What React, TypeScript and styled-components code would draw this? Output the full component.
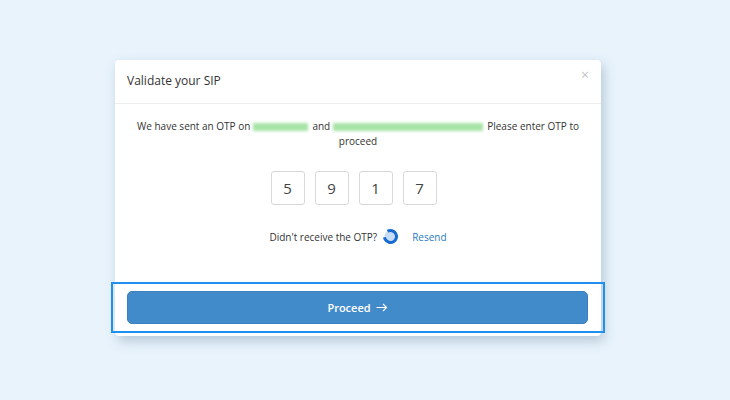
import styled, { createGlobalStyle } from "styled-components";

const Global = createGlobalStyle`
  html, body {
    margin: 0;
    padding: 0;
    background: #e8f3fc;
    font-family: "Open Sans", "Noto Sans", sans-serif;
  }
`;

const Page = styled.div`
  width: 730px;
  height: 400px;
  padding: 60px 0 0 115px;
  box-sizing: border-box;
`;

const Modal = styled.div`
  width: 486px;
  background: #fff;
  border-radius: 4px;
  box-shadow: 3px 5px 12px rgba(90, 120, 150, 0.35);
`;

const Header = styled.div`
  height: 44px;
  padding: 0 12px;
  display: flex;
  align-items: center;
  justify-content: space-between;
  border-bottom: 1px solid #eeeeee;
  box-sizing: border-box;
`;

const Title = styled.h4`
  margin: 0;
  font-size: 12px;
  font-weight: 400;
  color: #333;
  padding-bottom: 2px;
`;

const Close = styled.span`
  font-size: 14px;
  color: #c4c4c4;
  margin-top: -14px;
  line-height: 1;
`;

const Body = styled.div`
  padding: 15px 16px 0;
  text-align: center;
  color: #333;
  font-size: 10px;
`;

const Message = styled.p`
  margin: 0;
  line-height: 15px;
`;

const Blur = styled.span<{ $w: number }>`
  display: inline-block;
  width: ${(p) => p.$w}px;
  height: 8px;
  margin: 0 4px 0 3px;
  background: #a8e3a8;
  filter: blur(1.5px);
  vertical-align: middle;
`;

const OtpRow = styled.div`
  display: flex;
  justify-content: center;
  gap: 10px;
  margin-top: 22px;
  padding-right: 9px;
`;

const OtpBox = styled.div`
  width: 34px;
  height: 34px;
  border: 1px solid #d9d9d9;
  border-radius: 3px;
  box-sizing: border-box;
  display: flex;
  align-items: center;
  justify-content: center;
  font-size: 15px;
  color: #444;
`;

const ResendRow = styled.div`
  display: flex;
  justify-content: center;
  align-items: center;
  margin-top: 23px;
  font-size: 10px;
  color: #333;
`;

const Spinner = styled.svg`
  margin: 0 13px 0 5px;
`;

const ResendLink = styled.a`
  color: #2a7bc4;
  text-decoration: none;
`;

const Footer = styled.div`
  position: relative;
  padding: 46px 13px 12px 12px;
  &::after {
    content: "";
    position: absolute;
    left: -4px;
    right: -4px;
    top: 37px;
    bottom: 3px;
    border: 2px solid #1f8ff0;
    pointer-events: none;
  }
`;

const ProceedButton = styled.button`
  width: 100%;
  height: 33px;
  border: 1px solid #3a7fc0;
  border-radius: 5px;
  background: #428bca;
  color: #fff;
  font-family: inherit;
  font-size: 11px;
  font-weight: 600;
  display: flex;
  align-items: center;
  justify-content: center;
  gap: 5px;
`;

export default function App() {
  return (
    <>
      <Global />
      <Page>
        <Modal>
          <Header>
            <Title>Validate your SIP</Title>
            <Close>×</Close>
          </Header>
          <Body>
            <Message>
              We have sent an OTP on<Blur $w={55} />and<Blur $w={150} />Please enter OTP to
              <br />
              proceed
            </Message>
            <OtpRow>
              {["5", "9", "1", "7"].map((d, i) => (
                <OtpBox key={i}>{d}</OtpBox>
              ))}
            </OtpRow>
            <ResendRow>
              Didn't receive the OTP?
              <Spinner width="17" height="17" viewBox="0 0 17 17">
                <circle cx="8.5" cy="8.5" r="6" fill="#c9dcf5" />
                <circle
                  cx="8.5"
                  cy="8.5"
                  r="6"
                  fill="none"
                  stroke="#1869d0"
                  strokeWidth="3"
                  strokeDasharray="30 8"
                  transform="rotate(-120 8.5 8.5)"
                />
              </Spinner>
              <ResendLink href="#">Resend</ResendLink>
            </ResendRow>
          </Body>
          <Footer>
            <ProceedButton>
              Proceed
              <svg width="12" height="9" viewBox="0 0 12 9">
                <path d="M0.5 4.5h10M7 1l3.5 3.5L7 8" fill="none" stroke="#fff" strokeWidth="1.1" />
              </svg>
            </ProceedButton>
          </Footer>
        </Modal>
      </Page>
    </>
  );
}
